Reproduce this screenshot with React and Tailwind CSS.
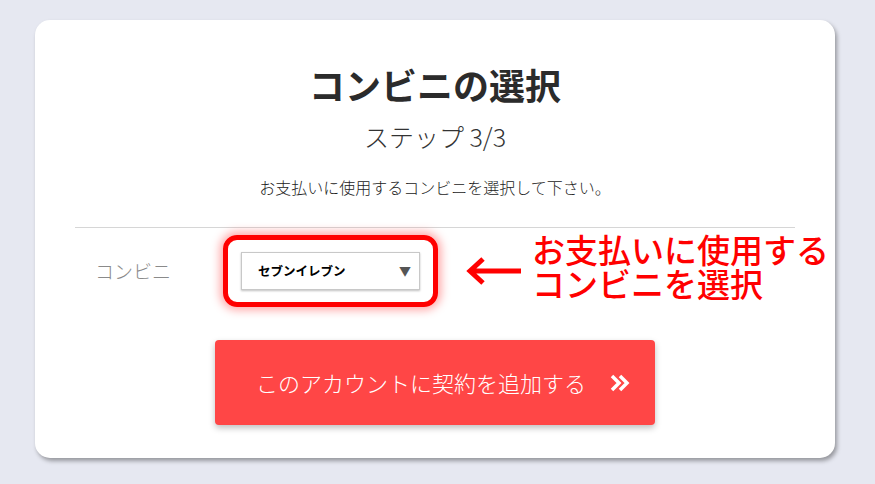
import React from 'react';

const font = { fontFamily: '"Noto Sans CJK JP", "Noto Sans", sans-serif' };

export default function App() {
    return (
        <div className="w-[875px] h-[484px] bg-[#e6e8f1] pt-[20px] pl-[35px] overflow-hidden" style={font}>
            {/* Card */}
            <div className="relative w-[800px] h-[438px] bg-white rounded-[15px] shadow-[2px_3px_4px_rgba(0,0,0,0.35)] flex flex-col items-center px-[40px] pt-[41px]">
                <h1 className="text-[36px] leading-[46px] font-bold text-[#2b2b2b]">コンビニの選択</h1>
                <p className="mt-[13px] text-[25px] leading-[32px] font-light text-[#333]">ステップ 3/3</p>
                <p className="mt-[24px] text-[16px] leading-[22px] font-light text-[#222]">お支払いに使用するコンビニを選択して下さい。</p>
                <div className="mt-[29px] w-full h-px bg-[#d6d6d6]" />

                {/* Select row */}
                <div className="w-full flex items-center mt-[5px] h-[76px]">
                    <span className="ml-[20px] w-[128px] text-[19px] font-light text-[#8a8a8a]">コンビニ</span>
                    <div className="rounded-[14px] border-[5px] border-[#ff0000] shadow-[0_0_10px_3px_rgba(255,0,0,0.35)] px-[13px] py-[12px]">
                        <div className="w-[179px] h-[38px] border border-[#c8c8c8] shadow-[0_1px_2px_rgba(0,0,0,0.25)] bg-white flex items-center justify-between pl-[16px] pr-[8px]">
                            <span className="text-[12.5px] font-bold text-black">セブンイレブン</span>
                            <span className="text-[12px] text-[#555]">▼</span>
                        </div>
                    </div>
                </div>

                {/* Button */}
                <button className="mt-[31px] w-[440px] h-[85px] bg-[#ff4646] rounded-[4px] shadow-[0_3px_6px_rgba(0,0,0,0.25)] flex items-center justify-center gap-[24px] text-white text-[22px] font-light pl-[16px]">
                    <span>このアカウントに契約を追加する</span>
                    <svg width="20" height="18" viewBox="0 0 20 18" fill="none" stroke="white" strokeWidth="3.5" strokeLinejoin="miter">
                        <path d="M2 2l7 7-7 7M10 2l7 7-7 7" />
                    </svg>
                </button>

                {/* Annotation */}
                <svg className="absolute left-[430px] top-[236px]" width="60" height="30" viewBox="0 0 60 30" fill="none" stroke="#ff0000" strokeWidth="5">
                    <path d="M4 15h52M18 3L5 15l13 12" />
                </svg>
                <div className="absolute left-[497px] top-[212px] text-[#ff0000] text-[33px] leading-[34px] font-medium whitespace-nowrap">
                    <div>お支払いに使用する</div>
                    <div>コンビニを選択</div>
                </div>
            </div>
        </div>
    );
}
